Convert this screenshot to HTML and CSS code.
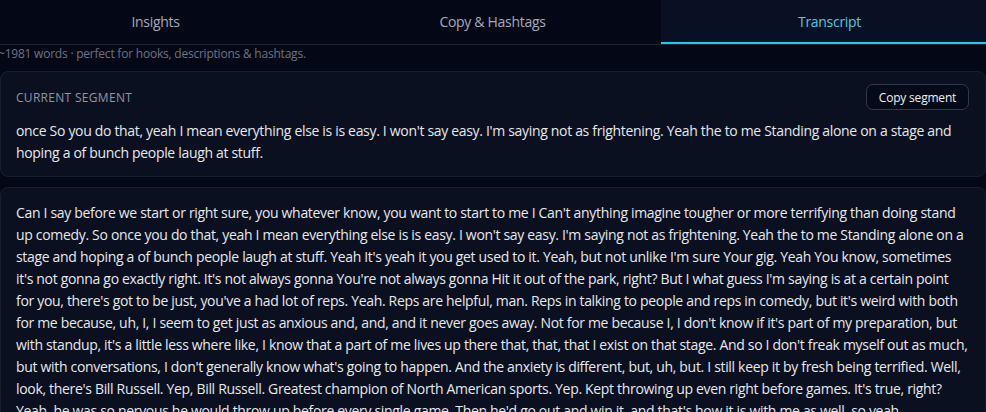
FILE: index.html
```html
<!DOCTYPE html>
<html lang="en">
<head>
<meta charset="utf-8">
<title>Transcript</title>
<link rel="stylesheet" href="styles.css">
</head>
<body>
<div class="page">
  <nav class="tabs">
    <div class="tab">Insights</div>
    <div class="tab">Copy &amp; Hashtags</div>
    <div class="tab active">Transcript</div>
  </nav>
  <p class="meta">~1981 words · perfect for hooks, descriptions &amp; hashtags.</p>
  <section class="card segment">
    <div class="seg-head">
      <span class="label">CURRENT SEGMENT</span>
      <button class="copy-btn">Copy segment</button>
    </div>
    <p class="text">once So you do that, yeah I mean everything else is is easy. I won't say easy. I'm saying not as frightening. Yeah the to me Standing alone on a stage and<br>hoping a of bunch people laugh at stuff.</p>
  </section>
  <section class="card transcript">
    <p class="text">Can I say before we start or right sure, you whatever know, you want to start to me I Can't anything imagine tougher or more terrifying than doing stand<br>up comedy. So once you do that, yeah I mean everything else is is easy. I won't say easy. I'm saying not as frightening. Yeah the to me Standing alone on a<br>stage and hoping a of bunch people laugh at stuff. Yeah It's yeah it you get used to it. Yeah, but not unlike I'm sure Your gig. Yeah You know, sometimes<br>it's not gonna go exactly right. It's not always gonna You're not always gonna Hit it out of the park, right? But I what guess I'm saying is at a certain point<br>for you, there's got to be just, you've a had lot of reps. Yeah. Reps are helpful, man. Reps in talking to people and reps in comedy, but it's weird with both<br>for me because, uh, I, I seem to get just as anxious and, and, and it never goes away. Not for me because I, I don't know if it's part of my preparation, but<br>with standup, it's a little less where like, I know that a part of me lives up there that, that, that I exist on that stage. And so I don't freak myself out as much,<br>but with conversations, I don't generally know what's going to happen. And the anxiety is different, but, uh, but. I still keep it by fresh being terrified. Well,<br>look, there's Bill Russell. Yep, Bill Russell. Greatest champion of North American sports. Yep. Kept throwing up even right before games. It's true, right?<br>Yeah, he was so nervous he would throw up before every single game. Then he'd go out and win it, and that's how it is with me as well, so yeah.</p>
  </section>
</div>
</body>
</html>
```
FILE: styles.css
```css
* { box-sizing: border-box; }
html, body {
  margin: 0;
  padding: 0;
  background: #040816;
  overflow: hidden;
  height: 412px;
}
body {
  font-family: "Open Sans", "Noto Sans", sans-serif;
  color: #e5e7eb;
}
.page {
  width: 986px;
}
.tabs {
  display: grid;
  grid-template-columns: repeat(3, 337px);
  margin-left: -13px;
  width: 1011px;
  border-bottom: 1px solid #1a2334;
}
.tab {
  height: 44px;
  display: flex;
  align-items: center;
  justify-content: center;
  font-size: 14px;
  letter-spacing: -0.3px;
  color: #a3a9b6;
  border-bottom: 2px solid transparent;
}
.tab.active {
  background: #091024;
  color: #4cc9e0;
  border-bottom-color: #19cfe8;
}
.meta {
  margin: 0 0 0 -2px;
  height: 26px;
  padding-top: 1px;
  font-size: 12px;
  letter-spacing: -0.22px;
  line-height: 16px;
  color: #6b7384;
}
.card {
  background: #0a1020;
  border: 1px solid #161e2f;
  border-radius: 8px;
  width: 986px;
}
.segment {
  padding: 12px 16px 12px 15px;
  margin-bottom: 10px;
}
.seg-head {
  display: flex;
  align-items: center;
  justify-content: space-between;
  height: 26px;
  margin-bottom: 10px;
}
.label {
  font-size: 12px;
  letter-spacing: 0.3px;
  color: #8e96a6;
}
.copy-btn {
  font-family: inherit;
  font-size: 12px;
  letter-spacing: -0.2px;
  color: #eef0f4;
  background: #050a18;
  border: 1px solid #2e394d;
  border-radius: 7px;
  height: 26px;
  width: 103px;
  padding: 0;
}
.text {
  margin: 0;
  font-size: 14px;
  letter-spacing: -0.32px;
  line-height: 22px;
  white-space: nowrap;
  color: #e6e8ee;
}
.segment .text {
  height: 44px;
}
.transcript {
  padding: 14px 16px 0 15px;
  height: 240px;
  overflow: hidden;
}
```
